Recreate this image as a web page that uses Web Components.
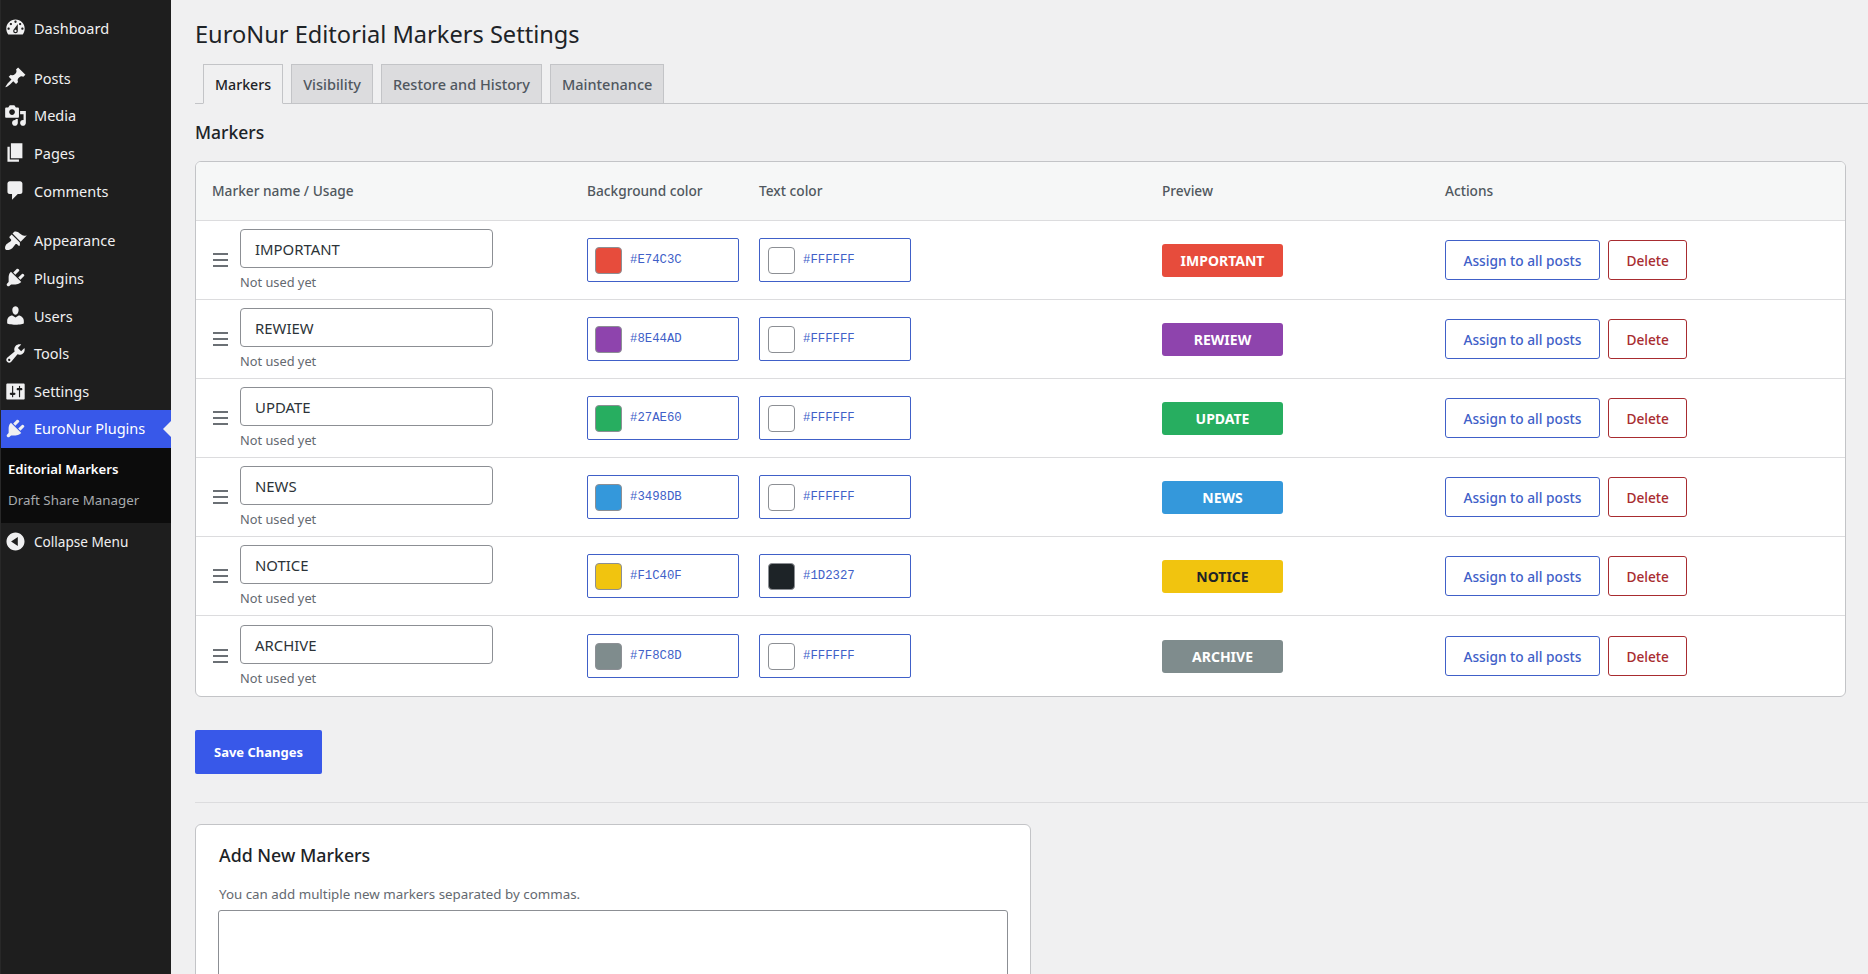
<!DOCTYPE html>
<html lang="en">
<head>
<meta charset="utf-8">
<title>EuroNur Editorial Markers Settings</title>
<style>
    html, body { margin: 0; height: 100%; overflow: hidden; background: #f0f0f1; }
    body { font-family: "Noto Sans", "Open Sans", sans-serif; color: #1d2327; }
</style>
</head>
<body>
<wp-admin>
    <admin-sidebar slot="sidebar">
        <menu-item icon="dashboard">Dashboard</menu-item>
        <menu-gap></menu-gap>
        <menu-item icon="post">Posts</menu-item>
        <menu-item icon="media">Media</menu-item>
        <menu-item icon="page">Pages</menu-item>
        <menu-item icon="comments">Comments</menu-item>
        <menu-gap></menu-gap>
        <menu-item icon="appearance">Appearance</menu-item>
        <menu-item icon="plugins">Plugins</menu-item>
        <menu-item icon="users">Users</menu-item>
        <menu-item icon="tools">Tools</menu-item>
        <menu-item icon="settings">Settings</menu-item>
        <menu-item icon="plugins" active>EuroNur Plugins</menu-item>
        <sub-menu>
            <sub-item current>Editorial Markers</sub-item>
            <sub-item>Draft Share Manager</sub-item>
        </sub-menu>
        <menu-item icon="collapse" small>Collapse Menu</menu-item>
    </admin-sidebar>

    <settings-page heading="EuroNur Editorial Markers Settings">
        <tab-bar>
            <tab-link active>Markers</tab-link>
            <tab-link>Visibility</tab-link>
            <tab-link>Restore and History</tab-link>
            <tab-link>Maintenance</tab-link>
        </tab-bar>
        <section-title>Markers</section-title>
        <markers-table>
            <marker-row name="IMPORTANT" bg="#E74C3C" fg="#FFFFFF"></marker-row>
            <marker-row name="REWIEW" bg="#8E44AD" fg="#FFFFFF"></marker-row>
            <marker-row name="UPDATE" bg="#27AE60" fg="#FFFFFF"></marker-row>
            <marker-row name="NEWS" bg="#3498DB" fg="#FFFFFF"></marker-row>
            <marker-row name="NOTICE" bg="#F1C40F" fg="#1D2327"></marker-row>
            <marker-row name="ARCHIVE" bg="#7F8C8D" fg="#FFFFFF"></marker-row>
        </markers-table>
        <save-bar>Save Changes</save-bar>
        <add-markers></add-markers>
    </settings-page>
</wp-admin>

<script>
//#region ICONS
const ICONS = {
    dashboard: "M3.76 16h12.48c1.1-1.37 1.76-3.11 1.76-5 0-4.42-3.58-8-8-8s-8 3.58-8 8c0 1.89.66 3.63 1.76 5zM10 4c.55 0 1 .45 1 1s-.45 1-1 1-1-.45-1-1 .45-1 1-1zM6 6c.55 0 1 .45 1 1s-.45 1-1 1-1-.45-1-1 .45-1 1-1zm8 0c.55 0 1 .45 1 1s-.45 1-1 1-1-.45-1-1 .45-1 1-1zm-5.37 5.55L12 7v6c0 1.1-.9 2-2 2s-2-.9-2-2c0-.57.24-1.08.63-1.45zM4 10c.55 0 1 .45 1 1s-.45 1-1 1-1-.45-1-1 .45-1 1-1zm12 0c.55 0 1 .45 1 1s-.45 1-1 1-1-.45-1-1 .45-1 1-1zm-5 3c0-.55-.45-1-1-1s-1 .45-1 1 .45 1 1 1 1-.45 1-1z",
    post: "M10.44 3.02l1.82-1.82 6.36 6.35-1.83 1.82c-1.05-.68-2.48-.57-3.41.36l-.75.75c-.92.93-1.04 2.35-.35 3.41l-1.83 1.82-2.41-2.41-2.8 2.79c-.42.42-3.38 2.71-3.8 2.29s1.86-3.39 2.28-3.81l2.79-2.79L4.1 9.36l1.83-1.82c1.05.69 2.48.57 3.4-.36l.75-.75c.93-.92 1.05-2.35.36-3.41z",
    media: "M13 11V4c0-.55-.45-1-1-1h-1.67L9 1H5L3.67 3H2c-.55 0-1 .45-1 1v7c0 .55.45 1 1 1h10c.55 0 1-.45 1-1zM7 4.5c1.38 0 2.5 1.12 2.5 2.5S8.38 9.5 7 9.5 4.5 8.38 4.5 7 5.62 4.5 7 4.5zM14 6h5v10.5c0 1.38-1.12 2.5-2.5 2.5S14 17.88 14 16.5s1.12-2.5 2.5-2.5c.17 0 .34.02.5.05V9h-3V6zm-4 8.05V13h2v3.5c0 1.38-1.12 2.5-2.5 2.5S7 17.88 7 16.5 8.12 14 9.5 14c.17 0 .34.02.5.05z",
    page: "M6 15V2h10v13H6zm-1 1h8v2H3V5h2v11z",
    comments: "M5 2h9c1.1 0 2 .9 2 2v7c0 1.1-.9 2-2 2h-2l-5 5v-5H5c-1.1 0-2-.9-2-2V4c0-1.1.9-2 2-2z",
    appearance: "M14.48 11.06L7.41 3.99l1.5-1.5c.5-.56 2.3-.47 3.51.32 1.21.8 1.43 1.28 2.91 2.1 1.18.64 2.45 1.26 4.45.85zm-.71.71L6.7 4.7 4.93 6.47c-.39.39-.39 1.02 0 1.41l1.06 1.06c.39.39.39 1.03 0 1.42-.6.6-1.43 1.11-2.21 1.69-.35.26-.7.53-1.01.84C1.43 13.23.28 16.78 1.4 17.9c1.12 1.12 4.67-.03 6.01-1.37.31-.31.58-.66.84-1.01.58-.78 1.09-1.61 1.69-2.21.39-.39 1.03-.39 1.42 0l1.06 1.06c.39.39 1.02.39 1.41 0z",
    plugins: "M13.11 4.36L9.87 7.6 8 5.73l3.24-3.24c.35-.34 1.05-.2 1.56.32.52.51.66 1.21.31 1.55zm-8 1.77l.91-1.12 9.01 9.01-1.19.84c-.71.71-2.63 1.16-3.82 1.16H6.14L4.9 17.26c-.59.59-1.54.59-2.12 0-.59-.58-.59-1.53 0-2.12l1.24-1.24v-3.88c0-1.13.4-3.19 1.09-3.89zm7.26 3.97l3.24-3.24c.34-.35 1.04-.21 1.55.31.52.51.66 1.21.31 1.55l-3.24 3.25z",
    users: "M10 9.25c-2.27 0-2.73-3.44-2.73-3.44C7 4.02 7.82 2 9.97 2c2.16 0 2.98 2.02 2.71 3.81 0 0-.41 3.44-2.68 3.44zm0 2.57L12.72 10c2.39 0 4.52 2.33 4.52 4.53v2.49s-3.65 1.13-7.24 1.13c-3.65 0-7.24-1.13-7.24-1.13v-2.49c0-2.25 1.94-4.48 4.47-4.48z",
    tools: "M16.68 9.77c-1.34 1.34-3.3 1.67-4.95.99l-5.41 6.52c-.99.99-2.59.99-3.58 0s-.99-2.59 0-3.57l6.52-5.42c-.68-1.65-.35-3.61.99-4.95 1.28-1.28 3.12-1.62 4.72-1.06l-2.89 2.89 2.82 2.82 2.86-2.87c.53 1.58.18 3.39-1.08 4.65zM3.81 16.21c.4.39 1.04.39 1.43 0 .4-.4.4-1.04 0-1.43-.39-.4-1.03-.4-1.43 0-.39.39-.39 1.03 0 1.43z",
    settings: "M18 16V4c0-.55-.45-1-1-1H3c-.55 0-1 .45-1 1v12c0 .55.45 1 1 1h14c.55 0 1-.45 1-1zM8 11h1c.55 0 1 .45 1 1s-.45 1-1 1H8v1.5c0 .28-.22.5-.5.5s-.5-.22-.5-.5V13H6c-.55 0-1-.45-1-1s.45-1 1-1h1V5.5c0-.28.22-.5.5-.5s.5.22.5.5V11zm5-2h-1c-.55 0-1-.45-1-1s.45-1 1-1h1V5.5c0-.28.22-.5.5-.5s.5.22.5.5V7h1c.55 0 1 .45 1 1s-.45 1-1 1h-1v5.5c0 .28-.22.5-.5.5s-.5-.22-.5-.5V9z",
    collapse: "M10 2.16c4.33 0 7.84 3.51 7.84 7.84s-3.51 7.84-7.84 7.84S2.16 14.33 2.16 10 5.71 2.16 10 2.16zm2 11.72V6.12L6.18 9.97z"
}
//#endregion ICONS

// small helper so every element below stays a one-liner to define
function define(tag, css, html) {
    customElements.define(tag, class extends HTMLElement {
        constructor() {
            super()
            this.attachShadow({ mode: "open" }).innerHTML = `<style>${css}</style>${html}`
        }
    })
}

//#region SHELL
define("wp-admin", `
    :host { display: flex; height: 100vh; overflow: hidden; }
`, `<slot name="sidebar"></slot><slot></slot>`)

define("admin-sidebar", `
    :host { display: block; flex: 0 0 171px; box-sizing: border-box; padding-top: 9px; background: #1e1e1e; border-left: 1px solid #282828; }
`, `<slot></slot>`)

define("menu-gap", `:host { display: block; height: 12px; }`, ``)

define("sub-menu", `
    :host { display: block; box-sizing: border-box; height: 75px; padding-top: 6px; background: #0c0c0c; }
`, `<slot></slot>`)

define("sub-item", `
    :host { display: block; height: 31px; line-height: 31px; padding-left: 7px; font-size: 13.35px; color: #a7aaad; white-space: nowrap; }
    :host([current]) { color: #fff; font-size: 13.2px; font-weight: 600; }
`, `<slot></slot>`)

class MenuItem extends HTMLElement {
    constructor() {
        super()
        this.attachShadow({ mode: "open" }).innerHTML = `
            <style>
                :host { display: flex; align-items: center; position: relative; box-sizing: border-box; height: 37.7px; gap: 7.5px; padding-left: 2.5px; font-size: 14.5px; color: #f0f0f1; white-space: nowrap; }
                :host([small]) { font-size: 13.6px; }
                :host([active]) { background: #3858e9; color: #fff; padding-bottom: 1px; }
                :host([active])::after { content: ""; position: absolute; right: 0; top: 50%; margin-top: -8px; border: 8px solid transparent; border-right-color: #f0f0f1; border-left-width: 0; }
                svg { width: 23px; height: 23px; fill: #f0f0f1; flex: none; }
            </style>
            <svg viewBox="0 0 20 20"><path d="${ICONS[this.getAttribute("icon")]}"/></svg>
            <slot></slot>`
    }
}
customElements.define("menu-item", MenuItem)
//#endregion SHELL

//#region PAGE
class SettingsPage extends HTMLElement {
    constructor() {
        super()
        this.attachShadow({ mode: "open" }).innerHTML = `
            <style>
                :host { display: block; flex: 1; min-width: 0; box-sizing: border-box; padding: 18px 22px 0 24px; }
                h1 { margin: 0 0 14px; font-size: 23.6px; line-height: 32px; font-weight: 400; color: #1d2327; }
            </style>
            <h1>${this.getAttribute("heading")}</h1>
            <slot></slot>`
    }
}
customElements.define("settings-page", SettingsPage)

define("tab-bar", `
    :host { display: flex; gap: 8px; height: 39px; padding-left: 8px; margin-right: -22px; border-bottom: 1px solid #c3c4c7; }
`, `<slot></slot>`)

define("tab-link", `
    :host { display: block; box-sizing: border-box; height: 40px; line-height: 39px; padding: 0 11px; font-size: 14.5px; font-weight: 500; color: #50575e; background: #dcdcde; border: 1px solid #c3c4c7; }
    :host([active]) { background: #f0f0f1; color: #1d2327; font-size: 14.2px; padding: 0 11px; border-bottom-color: #f0f0f1; }
`, `<slot></slot>`)

define("section-title", `
    :host { display: block; margin: 16px 0 17px; font-size: 17.5px; line-height: 24px; font-weight: 500; color: #1d2327; }
`, `<slot></slot>`)

define("markers-table", `
    :host { display: block; --cols: 375px 172px 403px 283px 1fr; background: #fff; border: 1px solid #c3c4c7; border-radius: 6px; overflow: hidden; box-sizing: border-box; width: 1651px; }
    .head { display: grid; grid-template-columns: var(--cols); align-items: center; box-sizing: border-box; height: 59px; padding: 0 0 2px 16px; background: #f6f7f7; border-bottom: 1px solid #dcdcde; font-size: 13.7px; font-weight: 500; color: #50575e; }
`, `
    <div class="head">
        <span>Marker name / Usage</span><span>Background color</span><span>Text color</span><span>Preview</span><span>Actions</span>
    </div>
    <slot></slot>`)

class ColorField extends HTMLElement {
    constructor() {
        super()
        const color = this.getAttribute("color")
        this.attachShadow({ mode: "open" }).innerHTML = `
            <style>
                :host { display: flex; align-items: center; gap: 8px; box-sizing: border-box; width: 152px; height: 44px; padding-left: 7px; background: #fff; border: 1px solid #4060c8; border-radius: 2px; }
                :host([text]) { padding-left: 8px; }
                i { display: block; box-sizing: border-box; width: 27px; height: 27px; border: 1px solid #8c8f94; border-radius: 4px; background: ${color}; }
                span { font: 12.3px "Liberation Mono", monospace; color: #4060c8; }
            </style>
            <i></i><span>${color}</span>`
    }
}
customElements.define("color-field", ColorField)

class MarkerRow extends HTMLElement {
    constructor() {
        super()
        const name = this.getAttribute("name")
        const bg = this.getAttribute("bg")
        const fg = this.getAttribute("fg")
        this.attachShadow({ mode: "open" }).innerHTML = `
            <style>
                :host { display: grid; grid-template-columns: var(--cols); align-items: center; box-sizing: border-box; height: 79.1px; padding-left: 16px; border-bottom: 1px solid #dcdcde; }
                :host(:last-child) { border-bottom: 0; }
                .name { display: flex; align-items: center; gap: 12px; }
                .handle { display: flex; flex-direction: column; gap: 4px; width: 15px; margin-left: 1px; }
                .handle b { display: block; height: 2px; background: #6b7075; }
                .field { display: block; box-sizing: border-box; width: 253px; height: 39px; line-height: 38px; padding-left: 14px; font-size: 14.9px; color: #2c3338; background: #fff; border: 1px solid #8c8f94; border-radius: 4px; }
                small { display: block; margin-top: 5px; line-height: 18px; font-size: 12.8px; color: #646970; }
                .badge { width: 121px; height: 33px; line-height: 33px; text-align: center; font-size: 14px; font-weight: 700; border-radius: 3px; background: ${bg}; color: ${fg}; }
                .actions { display: flex; gap: 8px; }
                .btn { box-sizing: border-box; height: 40px; line-height: 39px; padding: 0 17.5px; font-size: 13.7px; font-weight: 500; background: #fff; border: 1px solid #4060c8; border-radius: 3px; color: #4060c8; white-space: nowrap; }
                .btn.danger { border-color: #a82c30; color: #a82c30; }
            </style>
            <div class="name">
                <div class="handle"><b></b><b></b><b></b></div>
                <div>
                    <div class="field" role="textbox">${name}</div>
                    <small>Not used yet</small>
                </div>
            </div>
            <color-field color="${bg}"></color-field>
            <color-field text color="${fg}"></color-field>
            <div class="badge">${name}</div>
            <div class="actions">
                <div class="btn">Assign to all posts</div>
                <div class="btn danger">Delete</div>
            </div>`
    }
}
customElements.define("marker-row", MarkerRow)

define("save-bar", `
    :host { display: block; margin: 33px -22px 21px 0; padding-bottom: 28px; border-bottom: 1px solid #dcdcde; }
    button { display: block; width: 127px; height: 44px; padding: 0; font: 700 13px "Noto Sans", sans-serif; color: #fff; background: #3858e9; border: 0; border-radius: 2px; }
`, `<button><slot></slot></button>`)

define("add-markers", `
    :host { display: block; box-sizing: border-box; width: 836px; height: 300px; padding: 17px 23px 0; background: #fff; border: 1px solid #c3c4c7; border-radius: 6px; }
    h2 { margin: 0 0 16px; font-size: 17.8px; line-height: 26px; font-weight: 500; color: #1d2327; }
    p { margin: 0 0 6px; font-size: 13.35px; line-height: 20px; color: #646970; }
    .area { box-sizing: border-box; width: 790px; height: 120px; margin-left: -1px; background: #fff; border: 1px solid #8c8f94; border-radius: 3px; }
`, `
    <h2>Add New Markers</h2>
    <p>You can add multiple new markers separated by commas.</p>
    <div class="area"></div>`)
//#endregion PAGE
</script>
</body>
</html>
